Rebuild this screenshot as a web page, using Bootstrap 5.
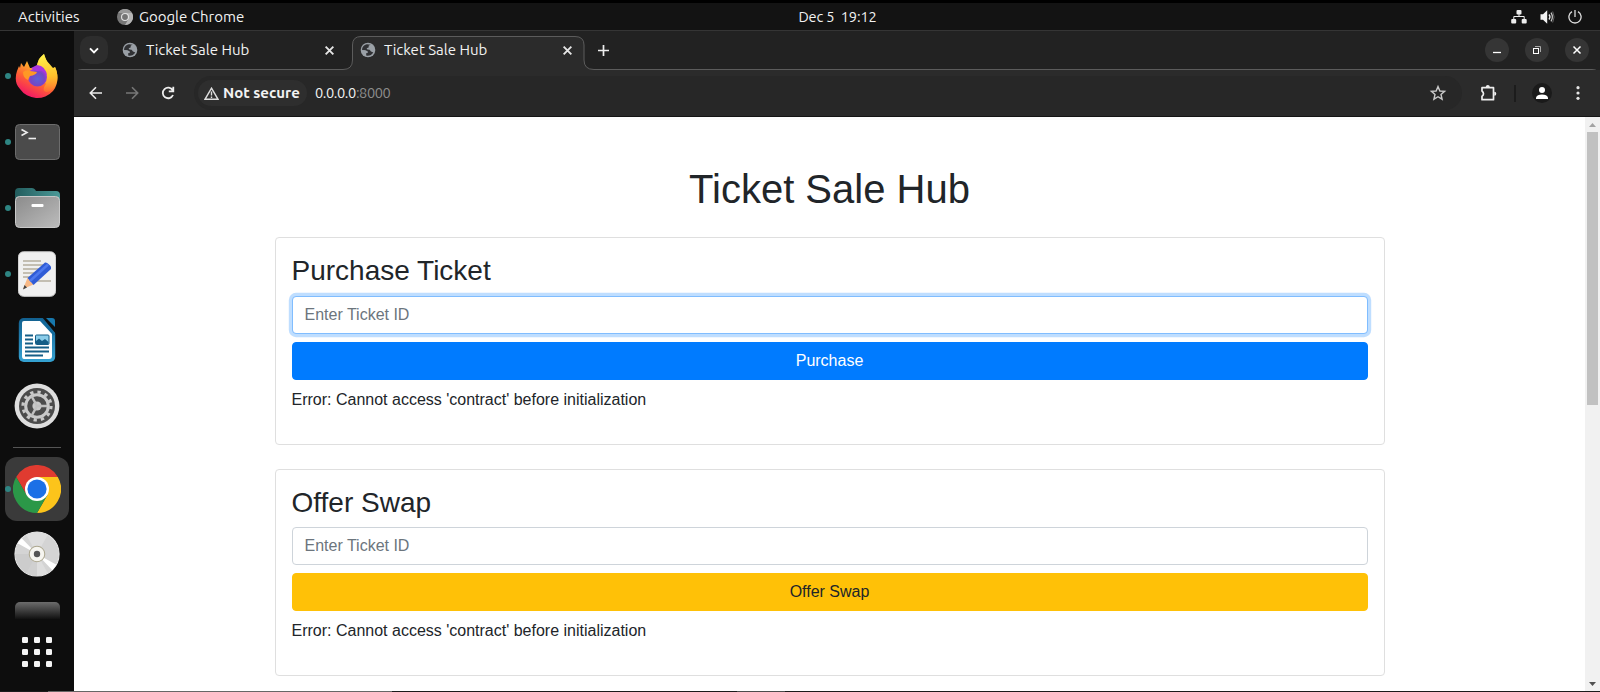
<!DOCTYPE html>
<html lang="en">
<head>
<meta charset="utf-8">
<title>Ticket Sale Hub</title>
<meta name="viewport" content="width=device-width, initial-scale=1">
<link rel="stylesheet" href="https://cdn.jsdelivr.net/npm/bootstrap@5.3.0/dist/css/bootstrap.min.css">
<style>
  body { height: 692px; overflow: hidden; background: #000; font-family: "Liberation Sans", Arial, sans-serif; color: #212529; }
  svg { display: block; flex: none; }
  .shell-text { font-family: Ubuntu, "Noto Sans", "Open Sans", sans-serif; font-size: 15px; line-height: 20px; color: #f2f2f2; white-space: nowrap; }
  .clock { width: 275px; font-size: 14.6px; letter-spacing: -.15px; }
  .address { font-size: 14.6px; letter-spacing: -.4px; margin-left: 8px; }
  .topbar { margin-top: 3px; height: 28px; background: #131313; border-bottom: 1px solid #353535; }
  .topbar .side { width: 700px; }
  .desk { height: 660px; }
  .dock { width: 74px; background: #0d0d0d; padding-top: 12px; }
  .slot { width: 74px; height: 66px; }
  .slot.running::before { content: ""; position: absolute; left: 5px; top: 30px; width: 6px; height: 6px; border-radius: 50%; background: #2e8583; }
  .slot.current { width: 64px; height: 64px; border-radius: 12px; background: #3a3a3a; }
  .slot.current::before { left: 0; top: 29px; }
  .dock-line { width: 48px; height: 1px; background: #555; margin: 8px 0 9px; }
  .peek { width: 45px; height: 17px; border-radius: 5px 5px 0 0; background: linear-gradient(#6c6c6c, #111); margin: 15px 0 18px; }
  .tabstrip { height: 39px; background: #222; }
  .tab-item { height: 38px; }
  .tab-item .name { width: 176px; }
  .chev { width: 28px; height: 28px; border-radius: 10px; background: #2d2d2d; margin-left: 6px; }
  .winbtn { width: 24px; height: 24px; border-radius: 50%; background: #353535; }
  .toolbar { height: 47px; background: #2b2b2b; border-bottom: 1px solid #161616; }
  .omni { width: 1268px; height: 34px; border-radius: 17px; background: #272727; padding: 0 14px 0 4px; margin-left: 19px; }
  .chip { width: 109px; height: 26px; border-radius: 13px; background: #2e2e2e; padding-left: 6px; }
  .page-view { height: 574px; background: #fff; overflow: hidden; }
  .sheet { width: 1140px; padding: 48px 15px 0; }
  .sheet h1 { font-size: 40px; margin-bottom: 24px; }
  .sheet h3 { font-size: 28px; }
  .sheet .card { border-color: #dfdfdf; border-radius: 4px; }
  .sheet .form-control { border-color: #ced4da; border-radius: 4px; }
  .sheet .form-control::placeholder { color: #6c757d; opacity: 1; }
  .sheet .form-control.active-field { border-color: #80bdff; box-shadow: 0 0 0 3.2px rgba(0,123,255,.25); }
  .sheet .btn { border-radius: 4px; }
  .btn-primary { --bs-btn-bg: #007bff; --bs-btn-border-color: #007bff; }
  .btn-warning { --bs-btn-color: #212529; }
  .scrollbar { width: 15px; background: #f1f1f1; }
  .thumb { width: 11px; height: 273px; background: #c1c1c1; }
  .edge-strip { height: 1px; background: linear-gradient(90deg, #1c1c1c 48px, #666 48px 392px, #1b1b1b 392px 737px, #4c4c4c 737px 785px, #1b1b1b 785px); }
</style>
</head>
<body>
<svg width="0" height="0" class="position-absolute">
  <defs>
    <symbol id="globe" viewBox="0 0 16 16">
      <circle cx="8" cy="8" r="7.3" fill="#9aa0a6"/>
      <path d="M7 2.2C4 2.7 2 5.2 2.1 8L6 8.6 7.8 9.5 7.6 11 6 11.3 6.4 13.7C9 14.3 12 13 13.3 10.6L11 9.6 9.6 7.7 7.4 7.4 6.6 6.2 8.6 5.4 8.8 3.6 10.7 2.7Z" fill="#303134"/>
      <path d="M2.3 8.2 4.7 8.3 7.3 9.6 7.2 10.8 5.5 11.4 5.7 13.2C3.6 12.3 2.3 10.4 2.3 8.2Z" fill="#9aa0a6"/>
    </symbol>
    <symbol id="cross" viewBox="0 0 10 10"><path d="M1.5 1.5 8.5 8.5M8.5 1.5 1.5 8.5" stroke="#e6e6e6" stroke-width="1.7"/></symbol>
  </defs>
</svg>

<header class="topbar d-flex align-items-center shell-text">
  <div class="side d-flex align-items-center">
    <span style="margin-left:18px;width:99px">Activities</span>
    <svg width="16" height="16" viewBox="0 0 16 16"><circle cx="8" cy="8" r="8" fill="#777"/><path d="M8 4H15A8 8 0 0 1 8 16L11.5 10Z" fill="#b5b5b5"/><path d="M1 4A8 8 0 0 1 15 4H8Z" fill="#989898"/><circle cx="8" cy="8" r="4" fill="#e3e3e3"/><circle cx="8" cy="8" r="2.9" fill="#747474"/></svg>
    <span style="margin-left:6px">Google Chrome</span>
  </div>
  <span class="clock text-center">Dec 5&nbsp; 19:12</span>
  <div class="d-flex align-items-center ms-auto" style="padding-right:18px;gap:13px">
    <svg width="16" height="14" viewBox="0 0 16 14" fill="#eee"><rect x="5.5" width="5" height="4.5" rx="1"/><rect x=".2" y="9" width="5" height="4.5" rx="1"/><rect x="10.7" y="9" width="5" height="4.5" rx="1"/><path d="M8 4V6.5M2.8 9.5V6.5H13.2V9.5" fill="none" stroke="#eee"/></svg>
    <svg width="15" height="14" viewBox="0 0 15 14"><path d="M.5 4.2H3L7.2.3V13.7L3 9.8H.5Z" fill="#f2f2f2"/><path d="M9 4.5Q11 7 9 9.5" fill="none" stroke="#eee" stroke-width="1.3"/><path d="M11 2.6Q13.700 7 11 11.4" fill="none" stroke="#ccc" stroke-width="1.2"/><path d="M12.700 1.500Q15.500 7 12.700 12.500" fill="none" stroke="#666"/></svg>
    <svg width="14" height="14" viewBox="0 0 14 14" fill="none" stroke="#ddd" stroke-width="1.3"><path d="M4 1.6A6.1 6.1 0 1 0 10 1.6M7 0V7"/></svg>
  </div>
</header>

<div class="desk d-flex">
  <nav class="dock d-flex flex-column align-items-center">
    <div class="slot running position-relative d-flex align-items-center justify-content-center">
      <svg width="44" height="46" viewBox="0 0 44 46">
        <defs>
          <linearGradient id="fx" x1=".8" y1="0" x2=".3" y2="1"><stop offset="0" stop-color="#fff44f"/><stop offset=".35" stop-color="#ffb52b"/><stop offset=".65" stop-color="#ff5f34"/><stop offset="1" stop-color="#f2116b"/></linearGradient>
          <linearGradient id="fy" x1=".5" y1="0" x2=".6" y2="1"><stop offset="0" stop-color="#fff24a"/><stop offset=".6" stop-color="#ffc12c"/><stop offset="1" stop-color="#ff8a2c" stop-opacity=".4"/></linearGradient>
          <radialGradient id="fp" cx=".5" cy=".6" r=".6"><stop offset="0" stop-color="#5c62d8"/><stop offset=".6" stop-color="#7547c4"/><stop offset="1" stop-color="#b833e1"/></radialGradient>
        </defs>
        <path d="M5 15 6 10 9 14 12 8 15 15 21 15 24 6 29 1 32 9 38 17 40 14C44 22 43 32 38 38A21 21 0 0 1 5 36C0 31 0 24 2 18L4 13Z" fill="url(#fx)"/>
        <path d="M22 14C22 9 25 4 29 1 30 7 34 10 38 15L40 14C45 25 42 34 35 38 28 41 27 36 31 31Z" fill="url(#fy)"/>
        <circle cx="22.500" cy="24" r="9.500" fill="url(#fp)"/>
        <path d="M22 12Q31 13 32 23 28 16 22 18L16 15Z" fill="#a936df"/>
        <path d="M8 19Q12 16 15 18L22 19Q21 22 15 23L13 27Q8 25 8 19Z" fill="#ff9825"/>
      </svg>
    </div>
    <div class="slot running position-relative d-flex align-items-center justify-content-center">
      <svg width="45" height="36" viewBox="0 0 45 36"><rect x=".5" y=".5" width="44" height="35" rx="4" fill="#4b4b4b" stroke="#6c6c6c"/><path d="M6.500 5.500 12 8.500 6.500 11.500" stroke="#eee" stroke-width="1.600" fill="none"/><path d="M13.500 14.500H21" stroke="#eee" stroke-width="1.600"/></svg>
    </div>
    <div class="slot running position-relative d-flex align-items-center justify-content-center">
      <svg width="45" height="40" viewBox="0 0 45 40"><defs><linearGradient id="fo" x2="1" y2="1"><stop stop-color="#8b8b8b"/><stop offset="1" stop-color="#bcbcbc"/></linearGradient><linearGradient id="ft" x2="1"><stop stop-color="#225c5d"/><stop offset="1" stop-color="#4b9a98"/></linearGradient></defs><path d="M0 20V4Q0 0 4 0H17Q19 0 20 1.500L21 3H41Q45 3 45 7V20Z" fill="url(#ft)"/><rect x=".5" y="8.500" width="44" height="31" rx="4" fill="url(#fo)" stroke="#c9c9c9"/><rect x="16.500" y="16" width="12" height="3" rx="1" fill="#fff"/></svg>
    </div>
    <div class="slot running position-relative d-flex align-items-center justify-content-center">
      <svg width="38" height="46" viewBox="0 0 38 46"><rect x=".5" y=".8" width="37" height="44.500" rx="5" fill="#f0f0f0" stroke="#d2d2d2"/><path d="M5 10H23M5 14H27M5 18H22M5 22H20M5 26H17M12 30H33" stroke="#c3beb2" stroke-width="1.800"/><path d="M5 38 9.500 27 15.500 33.500Z" fill="#f8b987"/><path d="M5 38.500 6.500 34 9 36.500Z" fill="#444"/><path d="M9.500 27 27 11.500Q29 11 33 15.500V18L15.500 34Z" fill="#2f5cd6"/><path d="M12 30 30 13.500" stroke="#4d79ee" stroke-width="2.500"/></svg>
    </div>
    <div class="slot d-flex align-items-center justify-content-center">
      <svg width="38" height="46" viewBox="0 0 38 46"><defs><linearGradient id="wr" x2="0" y2="1"><stop stop-color="#12608f"/><stop offset="1" stop-color="#35a2d2"/></linearGradient></defs><rect x=".8" y="1" width="36.400" height="44" rx="5" fill="url(#wr)"/><path d="M24 0H38V17Z" fill="#0d0d0d"/><path d="M28 1H34Q37 1 37 4V10Z" fill="#1778ad"/><path d="M22 2 36.500 18" stroke="#12699b" stroke-width="2"/><path d="M6 4H22L34 17V39Q34 42 31 42H6Q4 42 4 39V6Q4 4 6 4Z" fill="#fff"/><path d="M7 18.500H15M7 22.500H15M7 26.500H15M7 30.500H31M7 34.500H31M7 38.500H25" stroke="#155e87" stroke-width="2"/><rect x="17.500" y="18" width="13.500" height="9.500" rx="1" fill="#8bcdea" stroke="#155e87"/><path d="M18 27V24L21 21.500 24 24 27 22 30.500 25V27Z" fill="#155e87"/></svg>
    </div>
    <div class="slot d-flex align-items-center justify-content-center">
      <svg width="46" height="46" viewBox="0 0 46 46"><circle cx="23" cy="23" r="22.400" fill="#dedede"/><circle cx="23" cy="23" r="18" fill="#4c4c4c"/><circle cx="23" cy="23" r="14" fill="none" stroke="#c9c9c9" stroke-width="3.200" stroke-dasharray="3.300 4.030"/><circle cx="23" cy="23" r="11.300" fill="none" stroke="#c9c9c9" stroke-width="3"/><circle cx="23" cy="23" r="4.600" fill="#c9c9c9"/><path d="M23 23H33M23 23 17.500 13M23 23 17.500 33" stroke="#c0c0c0" stroke-width="2.500"/></svg>
    </div>
    <div class="dock-line"></div>
    <div class="slot current running position-relative d-flex align-items-center justify-content-center">
      <svg width="48" height="48" viewBox="0 0 48 48"><path d="M3.200 12A24 24 0 0 1 44.800 12H24L13.600 30Z" fill="#e03b30"/><path d="M44.800 12A24 24 0 0 1 24 48L34.400 30 24 12Z" fill="#fcc41b"/><path d="M24 48A24 24 0 0 1 3.200 12L13.600 30H34.400Z" fill="#2b9848"/><circle cx="24" cy="24" r="12" fill="#fff"/><circle cx="24" cy="24" r="9.600" fill="#1b70e6"/></svg>
    </div>
    <div class="slot d-flex align-items-center justify-content-center">
      <svg width="46" height="46" viewBox="0 0 45 45"><circle cx="22.500" cy="22.500" r="21.600" fill="#d4d4d4" stroke="#e8e8e8"/><path d="M22.500 22.500 12 4A21 21 0 0 1 33 4ZM22.500 22.500 12 41A21 21 0 0 0 33 41Z" fill="#dedede"/><path d="M22.500 22.500V44A22 22 0 0 1 1 22.500Z" fill="#c6c6c6" opacity=".6"/><path d="M22.500 22.500 3.500 12 7.500 7ZM22.500 22.500 37.500 38.500 41.500 33Z" fill="#fff"/><circle cx="22.500" cy="22.500" r="7.600" fill="#f6f5f0" stroke="#aca78f"/><circle cx="22.500" cy="22.500" r="3.100" fill="#555"/></svg>
    </div>
    <div class="peek"></div>
    <svg width="30" height="30" viewBox="0 0 30 30" fill="#f4f4f4"><rect width="6" height="6" rx="1.300"/><rect x="12" width="6" height="6" rx="1.300"/><rect x="24" width="6" height="6" rx="1.300"/><rect y="12" width="6" height="6" rx="1.300"/><rect x="12" y="12" width="6" height="6" rx="1.300"/><rect x="24" y="12" width="6" height="6" rx="1.300"/><rect y="24" width="6" height="6" rx="1.300"/><rect x="12" y="24" width="6" height="6" rx="1.300"/><rect x="24" y="24" width="6" height="6" rx="1.300"/></svg>
  </nav>

  <div class="flex-grow-1 d-flex flex-column">
    <div class="tabstrip position-relative">
      <svg class="position-absolute top-0 start-0" style="z-index:0" width="1526" height="48" viewBox="0 0 1526 48"><path d="M.5 47V46Q.5 38.500 8 38.500H269Q278.500 38.500 278.500 29V14Q278.500 5.500 287 5.500H501Q510 5.500 510 14V29Q510 38.500 520 38.500H1518Q1525.500 38.500 1525.500 46V47Z" fill="#2b2b2b"/><path d="M.5 46Q.5 38.500 8 38.500H269Q278.500 38.500 278.500 29V14Q278.500 5.500 287 5.500H501Q510 5.500 510 14V29Q510 38.500 520 38.500H1518Q1525.500 38.500 1525.500 46" fill="none" stroke="#5c5c5c"/></svg>
      <div class="position-relative d-flex align-items-center shell-text" style="z-index:1;height:38px">
        <div class="chev d-flex align-items-center justify-content-center"><svg width="10" height="7" viewBox="0 0 10 7"><path d="M1 1.300 5 5.300 9 1.300" fill="none" stroke="#fff" stroke-width="1.900"/></svg></div>
        <div class="tab-item d-flex align-items-center" style="margin-left:14px">
          <svg width="16" height="16"><use href="#globe"/></svg><span class="name" style="margin-left:8px">Ticket Sale Hub</span>
          <svg width="11" height="11" style="margin-left:2px"><use href="#cross"/></svg>
        </div>
        <div class="tab-item d-flex align-items-center" style="margin-left:25px">
          <svg width="16" height="16"><use href="#globe"/></svg><span class="name" style="margin-left:8px">Ticket Sale Hub</span>
          <svg width="11" height="11" style="margin-left:2px"><use href="#cross"/></svg>
        </div>
        <svg width="11" height="11" viewBox="0 0 11 11" style="margin-left:25px"><path d="M5.500 0V11M0 5.500H11" stroke="#eee" stroke-width="1.700"/></svg>
        <div class="d-flex gap-3 ms-auto" style="padding-right:11px">
          <div class="winbtn"><svg width="24" height="24"><path d="M8 14.500H16" stroke="#fff" stroke-width="1.300"/></svg></div>
          <div class="winbtn"><svg width="24" height="24" fill="none"><path d="M10 8.500H15.500V14" stroke="#aaa"/><rect x="8.500" y="10.500" width="5" height="5" stroke="#fff"/></svg></div>
          <div class="winbtn"><svg width="24" height="24"><path d="M8.500 8.500 15.500 15.500M15.500 8.500 8.500 15.500" stroke="#fff" stroke-width="1.500"/></svg></div>
        </div>
      </div>
    </div>

    <div class="toolbar d-flex align-items-center shell-text position-relative">
      <svg width="14" height="14" viewBox="0 0 14 14" fill="none" stroke="#eee" stroke-width="1.600" style="margin-left:15px"><path d="M13 7H1.500M7 1.300 1.300 7 7 12.700"/></svg>
      <svg width="14" height="14" viewBox="0 0 14 14" fill="none" stroke="#777" stroke-width="1.600" style="margin-left:22px"><path d="M1 7H12.500M7 1.300 12.700 7 7 12.700"/></svg>
      <svg width="14" height="14" viewBox="0 0 14 14" fill="none" stroke="#eee" stroke-width="1.800" style="margin-left:22px"><path d="M12 9A5.300 5.300 0 1 1 11.700 4.300M12.300 .8V5.300H7.800"/></svg>
      <div class="omni d-flex align-items-center">
        <div class="chip d-flex align-items-center">
          <svg width="15" height="13" viewBox="0 0 15 13"><path d="M7.500 1.200 14 12.300H1Z" fill="none" stroke="#ddd" stroke-width="1.400"/><path d="M7.500 4.500V8.500M7.500 9.500V11" stroke="#ddd" stroke-width="1.400"/></svg>
          <b style="margin-left:4px">Not secure</b>
        </div>
        <span class="address">0.0.0.0<span style="color:#8d8d8d">:8000</span></span>
        <svg class="ms-auto" width="20" height="20" viewBox="0 0 20 20" fill="none" stroke="#c9c9c9" stroke-width="1.400"><path d="M10 3.600 11.900 8 16.600 8.400 13 11.500 14.100 16.200 10 13.700 5.900 16.200 7 11.500 3.400 8.400 8.100 8Z"/></svg>
      </div>
      <svg width="17" height="18" viewBox="0 0 17 18" fill="#eee" style="margin-left:18px"><path d="M2 3.700H13.500V15.700H2V12.300Q5 9.700 2 7Z" fill="none" stroke="#eee" stroke-width="1.700" stroke-linejoin="round"/><path d="M5.800 3A2 2 0 0 1 9.800 3ZM14.300 7.700A2 2 0 0 1 14.300 11.700Z"/></svg>
      <div style="width:2px;height:17px;background:#1c1c1c;margin-left:17px"></div>
      <svg width="20" height="20" viewBox="0 0 20 20" style="margin-left:16px"><circle cx="10" cy="10" r="10" fill="#1a1a1a"/><circle cx="10" cy="7" r="3" fill="#fff"/><path d="M4 16V14.500Q5 11.500 10 11.500T16 14.500V16Z" fill="#fff"/></svg>
      <svg width="4" height="14" viewBox="0 0 4 14" fill="#e5e5e5" style="margin-left:24px"><circle cx="2" cy="1.700" r="1.600"/><circle cx="2" cy="7" r="1.600"/><circle cx="2" cy="12.300" r="1.600"/></svg>
    </div>

    <div class="page-view d-flex">
      <div class="flex-grow-1">
        <main class="sheet mx-auto">
          <h1 class="text-center">Ticket Sale Hub</h1>
          <section class="card mb-4"><div class="card-body">
            <h3>Purchase Ticket</h3>
            <input class="form-control active-field" placeholder="Enter Ticket ID">
            <button class="btn btn-primary w-100 mt-2">Purchase</button>
            <p class="mt-2 mb-3">Error: Cannot access 'contract' before initialization</p>
          </div></section>
          <section class="card mb-4"><div class="card-body">
            <h3>Offer Swap</h3>
            <input class="form-control" placeholder="Enter Ticket ID">
            <button class="btn btn-warning w-100 mt-2">Offer Swap</button>
            <p class="mt-2 mb-3">Error: Cannot access 'contract' before initialization</p>
          </div></section>
        </main>
      </div>
      <div class="scrollbar d-flex flex-column align-items-center">
        <svg width="15" height="15"><path d="M4 10 7.500 6 11 10Z" fill="#a3a3a3"/></svg>
        <div class="thumb"></div>
        <svg class="mt-auto" width="15" height="15"><path d="M4 6 7.500 10 11 6Z" fill="#505050"/></svg>
      </div>
    </div>
  </div>
</div>
<div class="edge-strip"></div>
<script src="https://cdn.jsdelivr.net/npm/bootstrap@5.3.0/dist/js/bootstrap.bundle.min.js"></script>
</body>
</html>
